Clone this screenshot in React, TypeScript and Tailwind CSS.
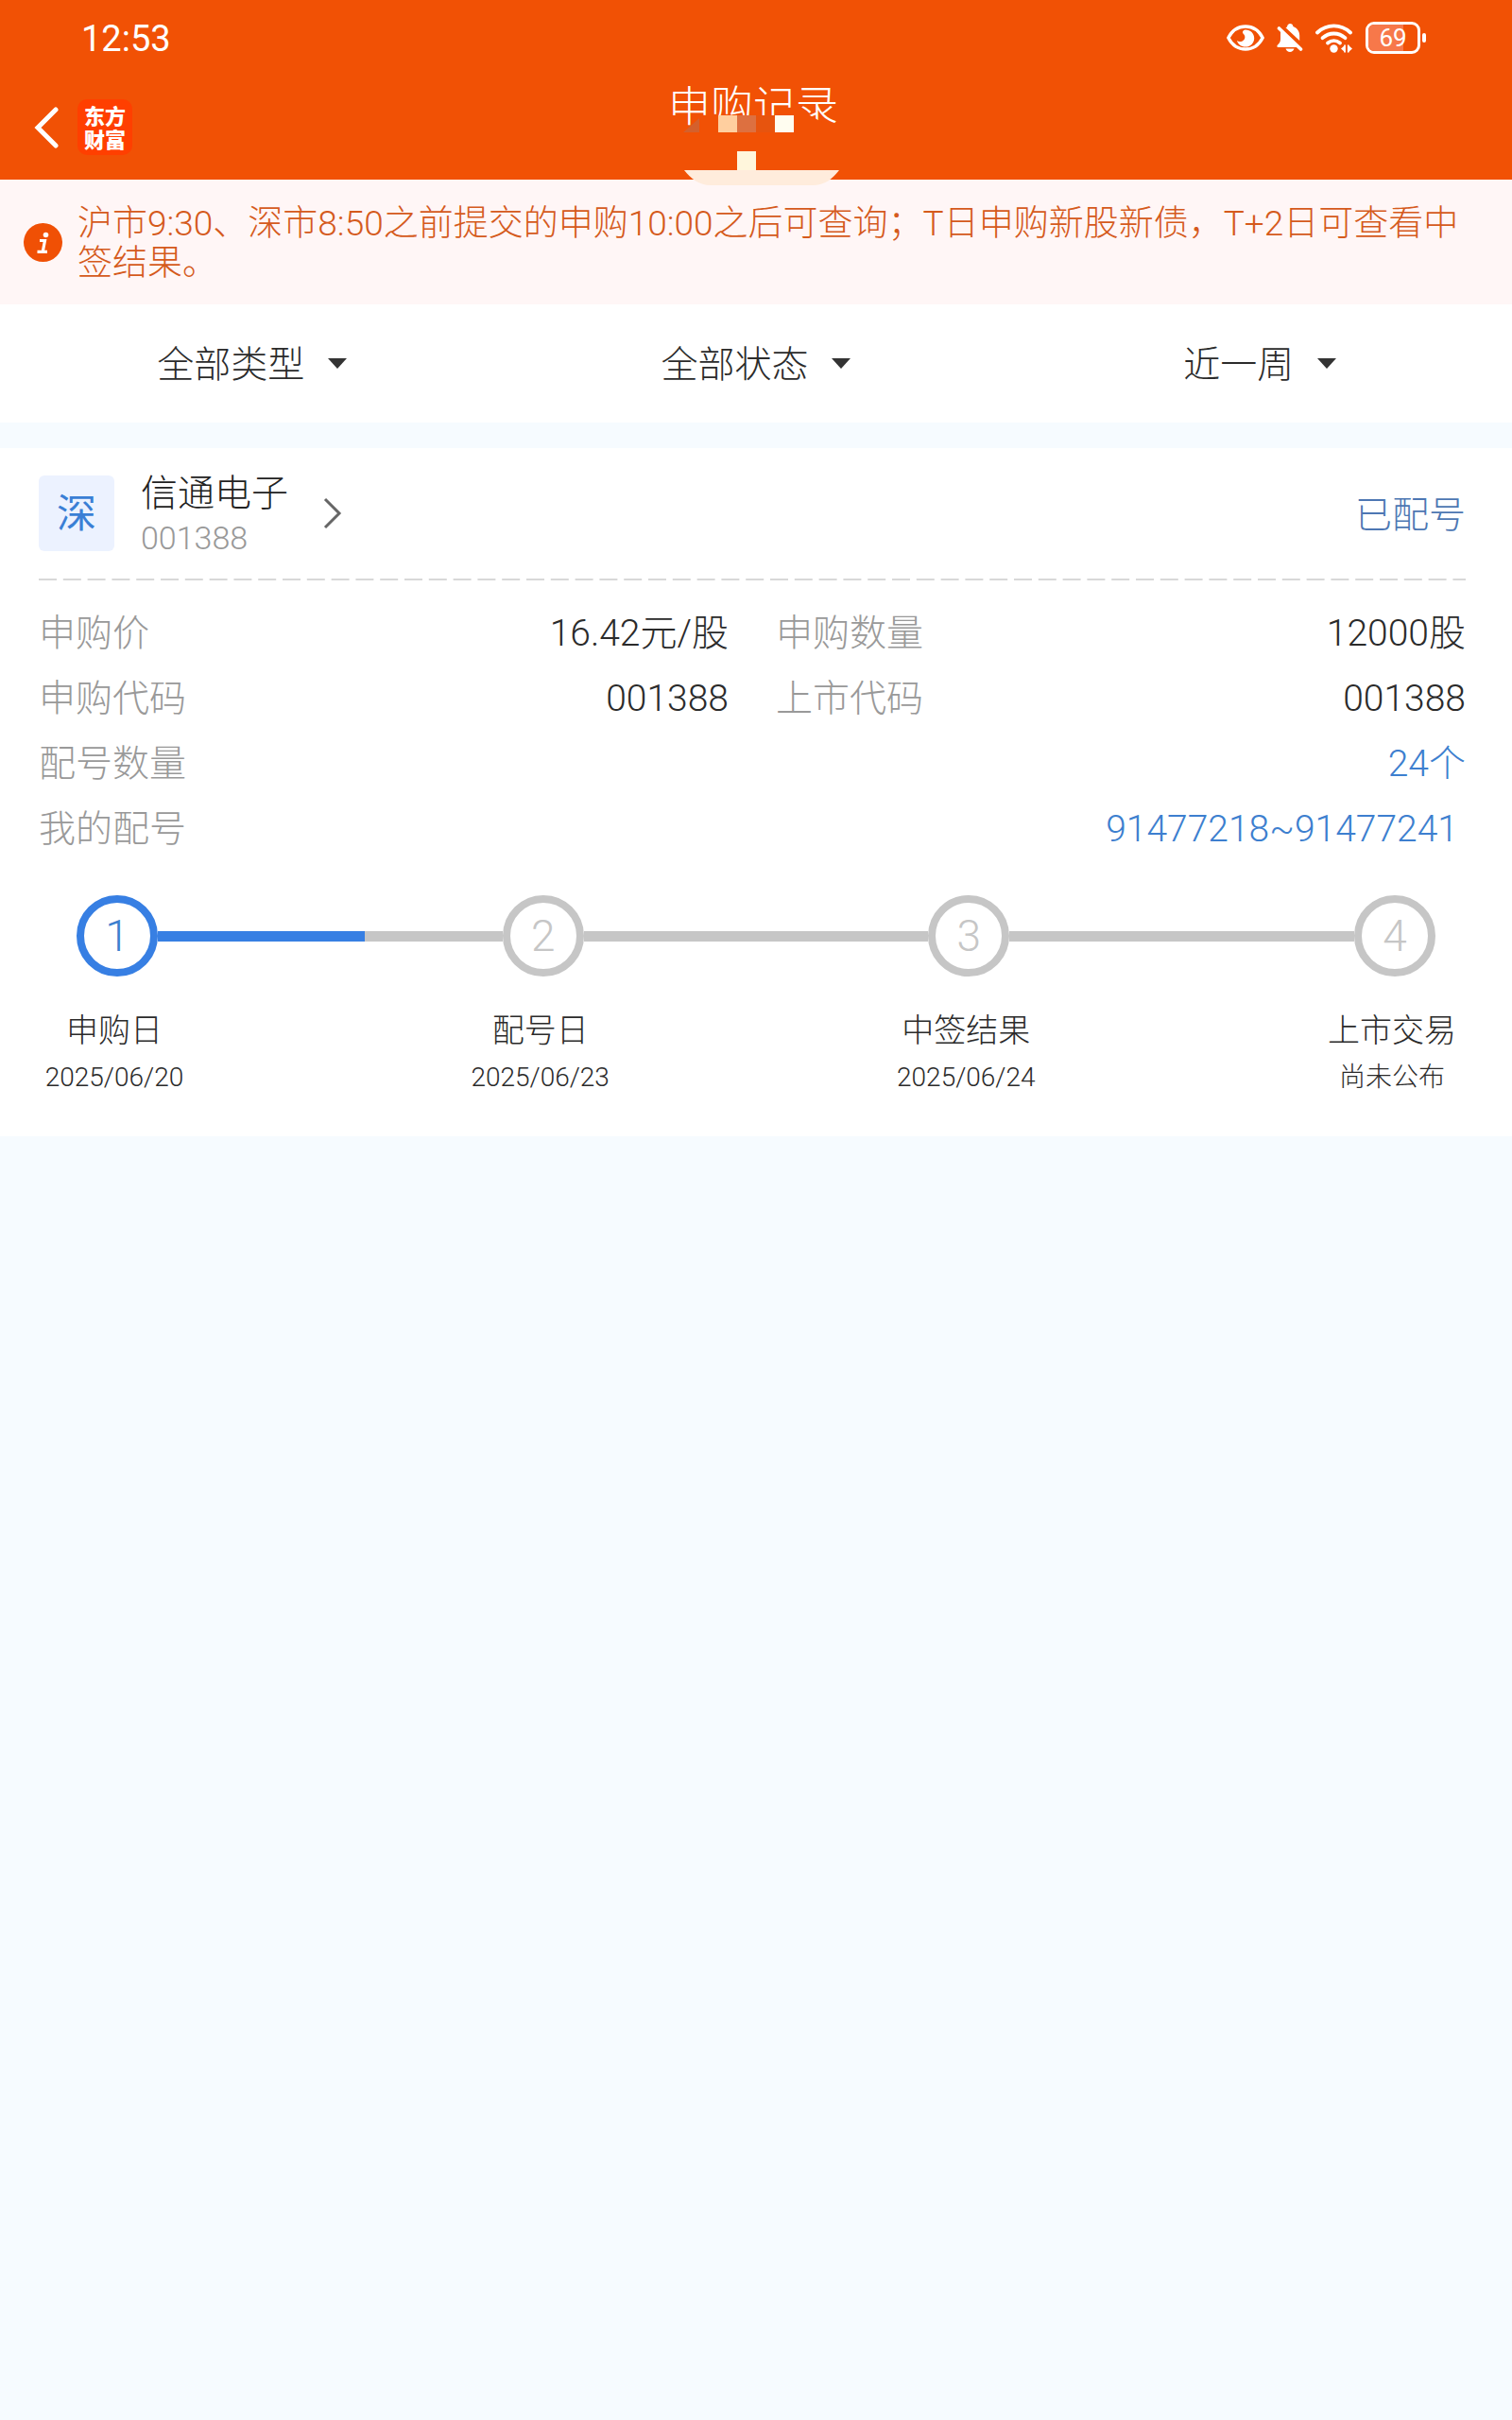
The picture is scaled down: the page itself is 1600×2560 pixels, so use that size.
const filters = [
  { label: "类型", value: "全部类型" },
  { label: "状态", value: "全部状态" },
  { label: "时间", value: "近一周" },
]

const details = [
  { label: "申购价", value: "16.42元/股" },
  { label: "申购数量", value: "12000股" },
  { label: "申购代码", value: "001388" },
  { label: "上市代码", value: "001388" },
]

const steps = [
  { title: "申购日", date: "2025/06/20", progress: 60 },
  { title: "配号日", date: "2025/06/23", progress: 0 },
  { title: "中签结果", date: "2025/06/24", progress: 0 },
  { title: "上市交易", date: "尚未公布", progress: 0 },
]

function EyeIcon() {
  return (
    <svg width="40" height="28" viewBox="0 0 40 28" fill="none">
      <path
        d="M1.8 14C6 6 12.500 2 20 2s14 4 18.200 12C34 22 27.500 26 20 26S6 22 1.800 14Z"
        stroke="#fff"
        strokeWidth="3.400"
        strokeLinejoin="round"
      />
      <path
        d="M19.500 5.500c5.500-.3 9.700 3.700 9.700 8.900 0 5-4 9.100-9.200 9.100-4.500 0-8-2.600-9-6.500 1.700 1.600 5 1.500 6.900-.4 2.500-2.500 1.500-5.500-.4-7.100-1-.8-.5-3.600 2-4Z"
        fill="#fff"
      />
    </svg>
  )
}

function BellOffIcon() {
  return (
    <svg width="28" height="30" viewBox="0 0 28 30">
      <path
        d="M11 3.500C11.200 1.200 12.500 0 14.200 0s3 1 3.200 3c4.300 1.600 6.700 5 6.800 9.500V18L9.500 4.300Z"
        fill="#fff"
      />
      <path d="M4.500 7.500 22.500 25H1.500c-1.300 0-1.500-1.600-.5-2.500 2.300-2 3-3.600 3-6.500V11c0-1.400.1-2.400.5-3.500Z" fill="#fff" />
      <path d="M9.500 26.500h9c-.8 2.200-2.400 3.500-4.500 3.500s-3.700-1.300-4.500-3.500Z" fill="#fff" />
      <path d="M4.500 2.500 27.500 24.500" stroke="#f15105" strokeWidth="2.400" />
      <path d="M2.500 5 25.500 27" stroke="#fff" strokeWidth="3.600" strokeLinecap="round" />
    </svg>
  )
}

function WifiIcon() {
  return (
    <svg width="40" height="31" viewBox="0 0 40 31" fill="none">
      <g stroke="#fff" strokeWidth="3.800" strokeLinecap="round">
        <path d="M2 9.500C12 .1 27 .1 37 9.500" />
        <path d="M7.500 15.200c7-6.300 17-6.300 24 0" />
        <path d="M13 20.500c4-3.200 9-3.200 13 0" />
      </g>
      <circle cx="19.500" cy="26.500" r="4.200" fill="#fff" />
      <path d="M27 26.500l4.500-4v8ZM39 26.500l-4.500-4v8Z" fill="#fff" />
      <path d="M31 22.500v8M34.700 22.500v8" stroke="#fff" strokeWidth="1.600" />
    </svg>
  )
}

function Battery() {
  return (
    <div className="flex items-center gap-0.5">
      <div className="relative flex h-[34px] w-[58px] items-center justify-center rounded-[9px] border-3 border-white">
        <span className="absolute inset-y-0 left-0 w-[37px] rounded-l-md bg-[#f7784a]" />
        <span className="relative text-[26px] leading-[28px] font-normal">69</span>
      </div>
      <span className="h-2.5 w-1 rounded-sm bg-white" />
    </div>
  )
}

// Pixel blocks and bowl that hang below the title
function TitleOrnament() {
  return (
    <svg
      className="pointer-events-none absolute -bottom-1.5 left-1/2 -translate-x-1/2"
      width="180"
      height="75"
      viewBox="710 121 180 75"
      aria-hidden="true"
    >
      <path d="M745 122h112l14 8v10H745Z" fill="#f15105" />
      <path d="M723 140 740 125v15Z" fill="#d4602c" />
      <rect x="760" y="122" width="20" height="18" fill="#ffcf9f" />
      <rect x="780" y="122" width="20" height="18" fill="#dd7040" />
      <rect x="800" y="122" width="20" height="18" fill="#e7540e" />
      <rect x="820" y="122" width="20" height="18" fill="#fffdf0" />
      <rect x="780" y="160" width="20" height="20" fill="#fff6dc" />
      <path d="M724 180h164c-7 9-15 16-28 16H752c-12 0-21-7-28-16Z" fill="#ffecdc" />
    </svg>
  )
}

function Header() {
  return (
    <header className="relative bg-[#f15105] text-white">
      <div className="flex h-20 items-center justify-between pr-[91px] pl-[86px]">
        <span className="pt-0.5 text-[38px] leading-[48px] font-normal">12:53</span>
        <div className="flex items-center gap-[13px]">
          <EyeIcon />
          <BellOffIcon />
          <WifiIcon />
          <Battery />
        </div>
      </div>
      <div className="grid h-[110px] grid-cols-[1fr_auto_1fr] items-start">
        <div className="flex items-center gap-5 pt-[25px] pl-9">
          <button aria-label="返回">
            <svg width="26" height="44" viewBox="0 0 26 44" fill="none">
              <path d="M23 3 4 22 23 41" stroke="#fff" strokeWidth="5" strokeLinecap="round" strokeLinejoin="miter" />
            </svg>
          </button>
          <a
            href="#"
            className="flex h-[59px] w-[58px] flex-col items-center justify-center rounded-[10px] bg-[#ff3f00] pt-0.5 text-[22px] leading-[25px] font-black"
          >
            <span>东方</span>
            <span>财富</span>
          </a>
        </div>
        <h1 className="pr-1.5 text-[45px] leading-[68px]">申购记录</h1>
      </div>
      <TitleOrnament />
    </header>
  )
}

function Notice() {
  return (
    <div className="flex items-center gap-4 bg-[#fff6f6] pt-[22px] pr-10 pb-[22px] pl-[25px]">
      <svg className="shrink-0" width="41" height="41" viewBox="0 0 41 41">
        <circle cx="20.500" cy="20.500" r="20.500" fill="#f05005" />
        <circle cx="23.500" cy="12.500" r="2.800" fill="#fff" />
        <path d="M17 18.500h5.500L20.300 30M14.500 30.300h10.500" stroke="#fff" strokeWidth="3.200" fill="none" />
      </svg>
      <p className="pt-1 text-[37px] leading-[42px] text-[#d55a1c]">
        沪市9:30、深市8:50之前提交的申购10:00之后可查询；T日申购新股新债，T+2日可查看中签结果。
      </p>
    </div>
  )
}

function FilterBar() {
  return (
    <div className="grid h-[125px] grid-cols-3 bg-white">
      {filters.map((filter) => (
        <label key={filter.label} className="flex items-center justify-center gap-6">
          <select
            aria-label={filter.label}
            className="appearance-none bg-transparent pt-0.5 text-[39px] leading-[56px] text-[#2b2b2b] outline-none"
          >
            <option>{filter.value}</option>
          </select>
          <svg width="20" height="11" viewBox="0 0 20 11" fill="#333">
            <path d="M0 0h20L10 11Z" />
          </svg>
        </label>
      ))}
    </div>
  )
}

function Steps() {
  return (
    <div className="pt-[35px]">
      <div className="flex items-center px-[81px]">
        {steps.map((step, index) => (
          <div key={step.title} className={index < steps.length - 1 ? "flex flex-1 items-center" : "flex items-center"}>
            <span
              className={`flex size-[86px] shrink-0 items-center justify-center rounded-full border-8 text-[46px] leading-[60px] ${
                index === 0 ? "border-[#377fe3] text-[#3d7fcf]" : "border-[#c6c6c6] text-[#c6c6c6]"
              }`}
            >
              {index + 1}
            </span>
            {index < steps.length - 1 && (
              <div className="h-[11px] flex-1 bg-[#c6c6c6]">
                <div className="h-full bg-[#377fe3]" style={{ width: `${step.progress}%` }} />
              </div>
            )}
          </div>
        ))}
      </div>
      <ol className="flex justify-between pt-8 pr-[51px] pl-[45px] text-center text-[#2b2b2b]">
        {steps.map((step) => (
          <li key={step.title} className="w-[152px]">
            <p className="text-[34px] leading-[50px]">{step.title}</p>
            <p className="text-[28px] leading-[50px]">{step.date}</p>
          </li>
        ))}
      </ol>
    </div>
  )
}

function RecordCard() {
  return (
    <section className="mt-[27px] bg-white pb-[37px]">
      <div className="pt-5 pr-[49px] pl-[41px]">
        <div className="flex items-center justify-between">
          <a href="#" className="flex items-center">
            <span className="flex size-20 items-center justify-center rounded-md bg-[#ecf2ff] pt-0.5 text-[42px] leading-[60px] font-normal text-[#3a7fd5]">
              深
            </span>
            <span className="ml-7 flex flex-col pt-1">
              <span className="text-[39px] leading-[48px] text-[#222]">信通电子</span>
              <span className="text-[34px] leading-[46px] text-[#999]">001388</span>
            </span>
            <svg className="ml-9" width="22" height="34" viewBox="0 0 22 34" fill="none">
              <path d="M3 2 18 17 3 32" stroke="#666" strokeWidth="3" />
            </svg>
          </a>
          <span className="pt-1 text-[39px] leading-[56px] text-[#4d77b3]">已配号</span>
        </div>
        <svg className="mt-5 block w-full" height="2" aria-hidden="true">
          <line x1="0" y1="1" x2="100%" y2="1" stroke="#ccc" strokeWidth="1.500" strokeDasharray="19 6.800" />
        </svg>
        <dl className="grid grid-cols-2 gap-x-[50px] pt-[22px] text-[39px] leading-[69px]">
          {details.map((item) => (
            <div key={item.label} className="flex justify-between">
              <dt className="text-[#999]">{item.label}</dt>
              <dd className="text-[#2b2b2b]">{item.value}</dd>
            </div>
          ))}
          <div className="col-span-2 flex justify-between">
            <dt className="text-[#999]">配号数量</dt>
            <dd className="text-[#3d7fcf]">24个</dd>
          </div>
          <div className="col-span-2 flex justify-between">
            <dt className="text-[#999]">我的配号</dt>
            <dd className="pr-2 text-[#3d7fcf]">91477218~91477241</dd>
          </div>
        </dl>
      </div>
      <Steps />
    </section>
  )
}

export default function App() {
  return (
    <div className="min-h-screen bg-[#f6fbff] font-[Roboto,'Noto_Sans_CJK_SC',sans-serif] font-light">
      <Header />
      <Notice />
      <main>
        <FilterBar />
        <RecordCard />
      </main>
    </div>
  )
}
